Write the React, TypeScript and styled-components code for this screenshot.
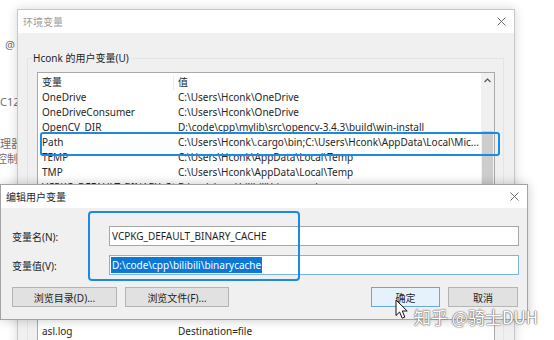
import styled, { createGlobalStyle } from "styled-components";

const GlobalStyle = createGlobalStyle`
  html, body {
    margin: 0;
    padding: 0;
    background: #ffffff;
  }
  body {
    font-family: "Noto Sans", "Noto Sans CJK SC", sans-serif;
    font-size: 10px;
    color: #222222;
  }
  * {
    box-sizing: border-box;
  }
`;

const userVars = [
  ["OneDrive", "C:\\Users\\Hconk\\OneDrive"],
  ["OneDriveConsumer", "C:\\Users\\Hconk\\OneDrive"],
  ["OpenCV_DIR", "D:\\code\\cpp\\mylib\\src\\opencv-3.4.3\\build\\win-install"],
  ["Path", "C:\\Users\\Hconk\\.cargo\\bin;C:\\Users\\Hconk\\AppData\\Local\\Mic..."],
  ["TEMP", "C:\\Users\\Hconk\\AppData\\Local\\Temp"],
  ["TMP", "C:\\Users\\Hconk\\AppData\\Local\\Temp"],
  ["VCPKG_DEFAULT_BINARY_CACHE", "D:\\code\\cpp\\bilibili\\binarycache"],
];

const systemVars = [
  ["ACSvcPort", "17532"],
  ["asl.log", "Destination=file"],
  ["ComSpec", "C:\\WINDOWS\\system32\\cmd.exe"],
];

const CloseGlyph = () => (
  <svg width="9" height="9" viewBox="0 0 9 9">
    <path d="M0.5 0.5 L8.5 8.5 M8.5 0.5 L0.5 8.5" stroke="#6a6a6a" strokeWidth="1" />
  </svg>
);

const Cursor = () => (
  <svg width="14" height="21" viewBox="0 0 14 21">
    <path
      d="M1 1 L1 16.5 L4.6 13 L7.2 19.2 L9.8 18.1 L7.3 12 L12.2 12 Z"
      fill="#ffffff"
      stroke="#111111"
      strokeWidth="1"
      strokeLinejoin="round"
    />
  </svg>
);

const VarList = ({
  rows,
  height,
  scroll,
}: {
  rows: string[][];
  height: number;
  scroll?: boolean;
}) => (
  <ListBox $height={height}>
    <ListRows>
      <Row>
        <Cell $divider>变量</Cell>
        <Cell>值</Cell>
      </Row>
      {rows.map(([name, value]) => (
        <Row key={name}>
          <Cell>{name}</Cell>
          <Cell>{value}</Cell>
        </Row>
      ))}
    </ListRows>
    {scroll && (
      <ScrollBar>
        <ScrollUp>
          <svg width="7" height="5" viewBox="0 0 7 5">
            <path d="M0.5 4 L3.5 1 L6.5 4" fill="none" stroke="#555" strokeWidth="1.2" />
          </svg>
        </ScrollUp>
        <Thumb />
      </ScrollBar>
    )}
  </ListBox>
);

const App = () => {
  return (
    <Desktop>
      <GlobalStyle />
      <BackWindow>
        <BackText $gap={38} $left={5}>@</BackText>
        <BackText $gap={43} $left={0}>C12</BackText>
        <BackText $gap={28} $left={0}>理器</BackText>
        <BackText $gap={1} $left={-4}>控制</BackText>
      </BackWindow>

      <EnvWindow>
        <TitleBar>
          <TitleText $muted>环境变量</TitleText>
          <CloseGlyph />
        </TitleBar>
        <EnvBody>
          <Group>
            <GroupLabel>Hconk 的用户变量(U)</GroupLabel>
            <VarList rows={userVars} height={148} scroll />
            <GroupButtons>
              <SmallButton>新建(N)...</SmallButton>
              <SmallButton>编辑(E)...</SmallButton>
              <SmallButton>删除(D)</SmallButton>
            </GroupButtons>
          </Group>
          <Group $gap={6}>
            <GroupLabel>系统变量(S)</GroupLabel>
            <VarList rows={systemVars} height={120} />
          </Group>
        </EnvBody>
        <PathMark />
      </EnvWindow>

      <EditDialog>
        <TitleBar>
          <TitleText>编辑用户变量</TitleText>
          <CloseGlyph />
        </TitleBar>
        <DialogBody>
          <FieldRow>
            <FieldLabel>变量名(N):</FieldLabel>
            <TextInput>VCPKG_DEFAULT_BINARY_CACHE</TextInput>
          </FieldRow>
          <FieldRow $gap={9}>
            <FieldLabel>变量值(V):</FieldLabel>
            <TextInput $focused>
              <Selected>D:\code\cpp\bilibili\binarycache</Selected>
            </TextInput>
          </FieldRow>
          <ButtonRow>
            <DialogButton $width={105}>浏览目录(D)...</DialogButton>
            <DialogButton $width={104}>浏览文件(F)...</DialogButton>
            <Spacer />
            <DialogButton $width={69} $primary>
              确定
            </DialogButton>
            <DialogButton $width={70}>取消</DialogButton>
          </ButtonRow>
        </DialogBody>
        <FieldMark />
      </EditDialog>

      <CursorSpot>
        <Cursor />
      </CursorSpot>
      <Watermark>知乎 @骑士DUH</Watermark>
    </Desktop>
  );
};

const Desktop = styled.div`
  position: relative;
  width: 554px;
  height: 340px;
  overflow: hidden;
  background: #ffffff;
`;

const BackWindow = styled.div`
  position: absolute;
  left: 0;
  top: 0;
  width: 40px;
  height: 340px;
  display: flex;
  flex-direction: column;
  color: #6f6f6f;
`;

const BackText = styled.div<{ $gap: number; $left: number }>`
  margin-top: ${(p) => p.$gap}px;
  margin-left: ${(p) => p.$left}px;
  font-size: 11px;
  line-height: 14px;
  white-space: nowrap;
`;

const EnvWindow = styled.div`
  position: absolute;
  left: 17px;
  top: 9px;
  width: 498px;
  height: 360px;
  display: flex;
  flex-direction: column;
  background: #f0f0f0;
  border: 1px solid #c8c8c8;
  box-shadow: 0 0 10px rgba(0, 0, 0, 0.16);
`;

const TitleBar = styled.div`
  display: flex;
  align-items: center;
  justify-content: space-between;
  height: 23px;
  flex-shrink: 0;
  padding: 0 8px 0 5px;
  background: #ffffff;
`;

const TitleText = styled.span<{ $muted?: boolean }>`
  font-size: 10px;
  color: ${(p) => (p.$muted ? "#9c9c9c" : "#1e1e1e")};
`;

const EnvBody = styled.div`
  display: flex;
  flex-direction: column;
  padding: 0 10px 0 9px;
`;

const Group = styled.fieldset<{ $gap?: number }>`
  margin: ${(p) => p.$gap ?? 17}px 0 0;
  padding: 6px 8px 10px 9px;
  min-width: 0;
  border: 1px solid #e4e4e4;
`;

const GroupLabel = styled.legend`
  margin-left: -5px;
  padding: 0 1px;
  font-size: 10px;
  line-height: 16px;
  color: #1e1e1e;
`;

const ListBox = styled.div<{ $height: number }>`
  display: flex;
  height: ${(p) => p.$height}px;
  background: #ffffff;
  border: 1px solid #a9a9a9;
  overflow: hidden;
`;

const ListRows = styled.div`
  flex: 1;
  min-width: 0;
  padding-top: 2px;
`;

const Row = styled.div`
  display: grid;
  grid-template-columns: 136px 1fr;
  height: 15px;
  line-height: 15px;
  white-space: nowrap;
  color: #262626;
`;

const Cell = styled.div<{ $divider?: boolean }>`
  padding-left: 4px;
  overflow: hidden;
  border-right: ${(p) => (p.$divider ? "1px solid #ececec" : "none")};
`;

const ScrollBar = styled.div`
  display: flex;
  flex-direction: column;
  width: 13px;
  background: #f0f0f0;
`;

const ScrollUp = styled.div`
  display: flex;
  align-items: center;
  justify-content: center;
  height: 16px;
`;

const Thumb = styled.div`
  margin: 42px 1px 0;
  height: 90px;
  background: #cdcdcd;
`;

const GroupButtons = styled.div`
  display: flex;
  justify-content: flex-end;
  gap: 8px;
  margin-top: 9px;
`;

const SmallButton = styled.div`
  display: flex;
  align-items: center;
  justify-content: center;
  width: 75px;
  height: 23px;
  background: #e1e1e1;
  border: 1px solid #adadad;
`;

const PathMark = styled.div`
  position: absolute;
  left: 22px;
  top: 122px;
  width: 460px;
  height: 24px;
  border: 2px solid #1b8ae4;
  border-radius: 3px;
`;

const EditDialog = styled.div`
  position: absolute;
  left: 0;
  top: 184px;
  width: 528px;
  height: 136px;
  display: flex;
  flex-direction: column;
  background: #f0f0f0;
  border: 1px solid #a3a3a3;
  box-shadow: 0 0 10px rgba(0, 0, 0, 0.22);
`;

const DialogBody = styled.div`
  display: flex;
  flex-direction: column;
  padding: 18px 8px 12px 11px;
`;

const FieldRow = styled.div<{ $gap?: number }>`
  display: flex;
  align-items: center;
  height: 20px;
  margin-top: ${(p) => p.$gap ?? 0}px;
`;

const FieldLabel = styled.div`
  width: 97px;
  flex-shrink: 0;
  color: #1e1e1e;
`;

const TextInput = styled.div<{ $focused?: boolean }>`
  display: flex;
  align-items: center;
  flex: 1;
  height: 100%;
  padding-left: ${(p) => (p.$focused ? 1 : 2)}px;
  background: #ffffff;
  border: 1px solid ${(p) => (p.$focused ? "#7db4e8" : "#a6a6a6")};
  color: #1e1e1e;
  white-space: nowrap;
`;

const Selected = styled.span`
  padding: 0 1px;
  line-height: 16px;
  background: #0a78d6;
  color: #ffffff;
`;

const ButtonRow = styled.div`
  display: flex;
  gap: 8px;
  margin-top: 12px;
  padding-right: 1px;
`;

const Spacer = styled.div`
  flex: 1;
`;

const DialogButton = styled.div<{ $width: number; $primary?: boolean }>`
  display: flex;
  align-items: center;
  justify-content: center;
  width: ${(p) => p.$width}px;
  height: 20px;
  background: ${(p) => (p.$primary ? "#e5f1fb" : "#e1e1e1")};
  border: 1px solid ${(p) => (p.$primary ? "#6aa7dc" : "#b4b4b4")};
  color: #1e1e1e;
`;

const FieldMark = styled.div`
  position: absolute;
  left: 87px;
  top: 26px;
  width: 212px;
  height: 70px;
  border: 2px solid #1b8ae4;
  border-radius: 4px;
`;

const CursorSpot = styled.div`
  position: absolute;
  left: 395px;
  top: 299px;
  line-height: 0;
`;

const Watermark = styled.div`
  position: absolute;
  left: 414px;
  top: 305px;
  font-family: "Noto Sans CJK SC", "Noto Sans", sans-serif;
  font-size: 17px;
  line-height: 24px;
  color: #ffffff;
  white-space: nowrap;
  text-shadow: 0 0 1px #666666, 0 0 1px #666666, 0 0 2px #888888;
`;

export default App;
